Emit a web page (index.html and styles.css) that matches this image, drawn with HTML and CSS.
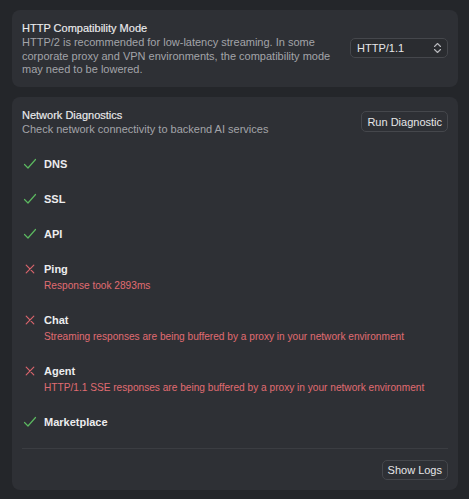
FILE: index.html
```html
<!DOCTYPE html>
<html>
<head>
<meta charset="utf-8">
<link rel="stylesheet" href="styles.css">
</head>
<body>
<div class="page">
  <section class="card card-mode">
    <div class="mode-text">
      <div class="title">HTTP Compatibility Mode</div>
      <div class="desc">HTTP/2 is recommended for low-latency streaming. In some corporate proxy and VPN environments, the compatibility mode may need to be lowered.</div>
    </div>
    <div class="select">
      <span>HTTP/1.1</span>
      <svg class="chev" width="9" height="12" viewBox="0 0 9 12"><path d="M1.5 4.5 L4.5 1.5 L7.5 4.5 M1.5 7.5 L4.5 10.5 L7.5 7.5" fill="none" stroke="#b8b9bd" stroke-width="1.1" stroke-linecap="round" stroke-linejoin="round"/></svg>
    </div>
  </section>

  <section class="card card-diag">
    <div class="diag-head">
      <div>
        <div class="title">Network Diagnostics</div>
        <div class="desc">Check network connectivity to backend AI services</div>
      </div>
      <button class="btn">Run Diagnostic</button>
    </div>

    <ul class="checks">
      <li class="check">
        <span class="icon"><svg width="14" height="12" viewBox="0 0 14 12"><path d="M1.5 6.5 L5 10 L12.5 1.5" fill="none" stroke="#5cb860" stroke-width="1.2" stroke-linecap="round" stroke-linejoin="round"/></svg></span>
        <div><div class="label">DNS</div></div>
      </li>
      <li class="check">
        <span class="icon"><svg width="14" height="12" viewBox="0 0 14 12"><path d="M1.5 6.5 L5 10 L12.5 1.5" fill="none" stroke="#5cb860" stroke-width="1.2" stroke-linecap="round" stroke-linejoin="round"/></svg></span>
        <div><div class="label">SSL</div></div>
      </li>
      <li class="check">
        <span class="icon"><svg width="14" height="12" viewBox="0 0 14 12"><path d="M1.5 6.5 L5 10 L12.5 1.5" fill="none" stroke="#5cb860" stroke-width="1.2" stroke-linecap="round" stroke-linejoin="round"/></svg></span>
        <div><div class="label">API</div></div>
      </li>
      <li class="check">
        <span class="icon"><svg width="10" height="10" viewBox="0 0 10 10"><path d="M1.2 1.2 L8.8 8.8 M8.8 1.2 L1.2 8.8" fill="none" stroke="#d9646c" stroke-width="1.2" stroke-linecap="round"/></svg></span>
        <div><div class="label">Ping</div><div class="err">Response took 2893ms</div></div>
      </li>
      <li class="check">
        <span class="icon"><svg width="10" height="10" viewBox="0 0 10 10"><path d="M1.2 1.2 L8.8 8.8 M8.8 1.2 L1.2 8.8" fill="none" stroke="#d9646c" stroke-width="1.2" stroke-linecap="round"/></svg></span>
        <div><div class="label">Chat</div><div class="err">Streaming responses are being buffered by a proxy in your network environment</div></div>
      </li>
      <li class="check">
        <span class="icon"><svg width="10" height="10" viewBox="0 0 10 10"><path d="M1.2 1.2 L8.8 8.8 M8.8 1.2 L1.2 8.8" fill="none" stroke="#d9646c" stroke-width="1.2" stroke-linecap="round"/></svg></span>
        <div><div class="label">Agent</div><div class="err">HTTP/1.1 SSE responses are being buffered by a proxy in your network environment</div></div>
      </li>
      <li class="check">
        <span class="icon"><svg width="14" height="12" viewBox="0 0 14 12"><path d="M1.5 6.5 L5 10 L12.5 1.5" fill="none" stroke="#5cb860" stroke-width="1.2" stroke-linecap="round" stroke-linejoin="round"/></svg></span>
        <div><div class="label">Marketplace</div></div>
      </li>
    </ul>

    <div class="divider"></div>
    <div class="footer">
      <button class="btn">Show Logs</button>
    </div>
  </section>
</div>
</body>
</html>
```

FILE: styles.css
```css
* { box-sizing: border-box; }
html, body {
  margin: 0;
  padding: 0;
  background: #24262a;
}
body {
  font-family: "Liberation Sans", Arial, sans-serif;
  color: #e6e6e8;
  -webkit-font-smoothing: antialiased;
}
.page {
  display: flex;
  flex-direction: column;
  gap: 10px;
  padding: 10px 11px 7px 12px;
}
.card {
  background: #2e3035;
  border-radius: 8px;
  padding: 10px 10px 10px 10px;
}
.card-mode {
  display: flex;
  align-items: center;
  gap: 4px;
}
.mode-text { flex: 1; }
.title {
  font-size: 11px;
  line-height: 16px;
  font-weight: 400;
  color: #ececee;
  -webkit-text-stroke: 0.15px #ececee;
}
.desc {
  font-size: 11px;
  line-height: 13.5px;
  color: #a3a4a9;
}
.select {
  flex: none;
  width: 98px;
  height: 20px;
  border: 1px solid #45474c;
  border-radius: 5px;
  background: #2a2c30;
  display: flex;
  align-items: center;
  justify-content: space-between;
  padding: 0 5px 0 6px;
  font-size: 11px;
  color: #e6e6e8;
}
.chev { display: block; }
.diag-head {
  display: flex;
  justify-content: space-between;
  align-items: center;
}
.btn {
  font-family: inherit;
  font-size: 11px;
  line-height: 14px;
  color: #e6e6e8;
  background: #2e3035;
  border: 1px solid #45474c;
  border-radius: 5px;
  padding: 3px 5px;
  height: 21px;
}
.checks {
  list-style: none;
  margin: 20px 0 0 0;
  padding: 0;
  display: flex;
  flex-direction: column;
  gap: 19px;
}
.check {
  display: flex;
  align-items: flex-start;
  gap: 6px;
}
.icon {
  flex: none;
  width: 16px;
  height: 16px;
  display: flex;
  align-items: center;
  justify-content: center;
}
.icon svg { display: block; }
.label {
  font-size: 11px;
  line-height: 16px;
  font-weight: 700;
  color: #ececee;
}
.err {
  font-size: 10.15px;
  line-height: 15px;
  margin-top: 1px;
  color: #e06c72;
  white-space: nowrap;
}
.divider {
  height: 1px;
  background: #3b3d42;
  margin-top: 18px;
}
.footer {
  display: flex;
  justify-content: flex-end;
  padding-top: 11px;
}
.footer .btn { height: 20px; padding: 2px 5px; }
```
